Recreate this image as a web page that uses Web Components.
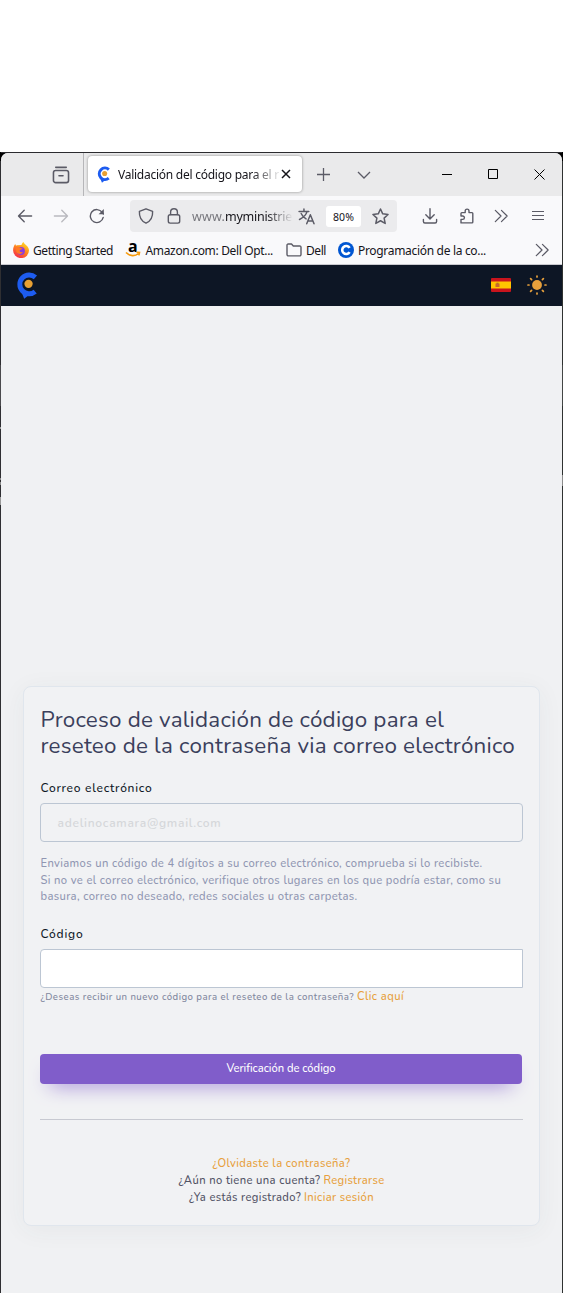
<!DOCTYPE html>
<html lang="es">
<head>
<meta charset="utf-8">
<title>Validación del código</title>
<style>
html,body{margin:0;background:#fff}
body{height:1293px;overflow:hidden;padding-top:152px;box-sizing:border-box}
</style>
</head>
<body>
<browser-window>
  <tab-strip slot="chrome"></tab-strip>
  <nav-toolbar slot="chrome"></nav-toolbar>
  <bookmarks-bar slot="chrome"></bookmarks-bar>
  <site-header></site-header>
  <code-form></code-form>
</browser-window>
<script>
const define=(name,html,init)=>customElements.define(name,class extends HTMLElement{
  constructor(){super();this.attachShadow({mode:'open'}).innerHTML=html;}
  connectedCallback(){if(init)init(this);}
});

/* One line of text, tracked so that it fills the width in its "w" attribute. */
define('text-line','<style>:host{display:inline-block;white-space:pre;flex:none}span{display:inline-block}</style><span><slot></slot></span>',el=>{
  const w=+el.getAttribute('w');
  const s=el.shadowRoot.querySelector('span');
  s.style.letterSpacing='0px';
  const d=(w-s.getBoundingClientRect().width)/Math.max(1,el.textContent.length);
  s.style.letterSpacing=d+'px';
  el.style.width=w+'px';
});

const logo=(w,h)=>`<svg width="${w}" height="${h}" viewBox="0 0 22 26"><path d="M18.600 5.200A9 9 0 1 0 18.400 18.800" fill="none" stroke="#1d5cf0" stroke-width="4.700"/><path d="M5.500 20 L7.800 25.800 L14 21z" fill="#1d5cf0"/><circle cx="12" cy="11.400" r="4" fill="#e8a033"/></svg>`;
const svg=(w,body,extra='')=>`<svg width="${w}" height="${w}" viewBox="0 0 16 16" fill="none" stroke="#5b5b66" stroke-width="1.4" stroke-linecap="round" stroke-linejoin="round" ${extra}>${body}</svg>`;

define('browser-window',`<style>
:host{display:flex;flex-direction:column;box-sizing:border-box;height:1141px;padding:1px 1px 0;
background:
linear-gradient(#000 9px,#2f2f32 9px 213px,#4a4a4d 213px 254px,#2f2f32 254px 275px,#999 275px 277px,#2f2f32 277px 326px,#888 326px 328px,#2f2f32 328px 330px,#888 330px 333px,#2f2f32 333px 345px,#999 345px 353px,#2f2f32 353px) left/1px 100% no-repeat,
linear-gradient(#000 9px,#2f3231 9px 213px,#434645 213px 254px,#2f3231 254px 323px,#8c8c8c 323px 334px,#2f3231 334px) right/1px 100% no-repeat,
linear-gradient(#2b2b2f,#2b2b2f) top/100% 1px no-repeat,#000}
.win{flex:1;display:flex;flex-direction:column;border-radius:7px 7px 0 0;overflow:hidden;background:#f0f1f3}
</style><div class="win"><slot name="chrome"></slot><slot></slot></div>`);

define('tab-strip',`<style>
:host{display:flex;height:43px;background:#eaeaeb;font:12px "Noto Sans","Open Sans",sans-serif;color:#15141a}
.view{width:82px;border-right:1px solid #b6b6b9;box-sizing:content-box;display:flex;align-items:center;padding-left:0}
.view svg{margin-left:51px}
.tab{margin:3px 0 0 4px;width:214px;height:36px;background:#fff;border-radius:4px;box-shadow:0 0 3px rgba(0,0,0,.4);display:flex;align-items:center;box-sizing:border-box;padding-left:9px}
.t{width:162px;margin-left:7px;-webkit-mask-image:linear-gradient(90deg,#000 134px,transparent 164px)}
.x{margin-left:1px}
.r{display:flex;align-items:center;flex:1}
</style>
<div class="view">${svg(18,'<path d="M3.3 1.2h9.4" /><rect x="1.3" y="4" width="13.4" height="10.8" rx="2"/><path d="M6.2 8.6h3.6"/>')}</div>
<div class="tab">${logo(14,17)}<div class="t"><text-line w="161">Validación del código para el r</text-line></div><svg class="x" width="10" height="10" viewBox="0 0 10 10" stroke="#15141a" stroke-width="1.5"><path d="M1 1l8 8M9 1l-8 8"/></svg></div>
<div class="r"><svg style="margin-left:15px" width="13" height="13" stroke="#5b5b66" stroke-width="1.3"><path d="M6.5 0v13M0 6.5h13"/></svg>
<svg style="margin-left:27px" width="14" height="8" fill="none" stroke="#5b5b66" stroke-width="1.3"><path d="M1 1l6 6 6-6"/></svg>
<svg style="margin-left:71px" width="10" height="10" stroke="#000"><path d="M0 4.5h10"/></svg>
<svg style="margin-left:36px;position:relative;top:-1px" width="10" height="10" stroke="#000" fill="none"><path d="M.5 .5h9v9h-9z"/></svg>
<svg style="margin-left:35.5px" width="11" height="11" stroke="#000" fill="none"><path d="M.5 .5l10 10M10.5 .5l-10 10"/></svg></div>`);

define('nav-toolbar',`<style>
:host{display:flex;align-items:center;height:40px;background:#f9f9fb;font:12.5px "Noto Sans","Open Sans",sans-serif;color:#15141a}
svg{flex:none}
.url{margin-left:25px;width:267px;height:32px;box-sizing:border-box;background:#ebebed;border-radius:4px;display:flex;align-items:center;padding-left:8px}
.h{width:100px;margin-left:10px;color:#77777d;-webkit-mask-image:linear-gradient(90deg,#000 74px,transparent 101px);display:flex}
b{font-weight:400;color:#15141a}
.z{margin-left:11px;width:35px;height:21px;line-height:22px;border-radius:3px;background:#fff;font-size:10.5px;display:flex;justify-content:center}
</style>
${svg(16,'<path d="M14.6 8H1.6M7.2 2.3L1.5 8l5.7 5.7"/>','style="margin-left:16px"')}
${svg(16,'<path d="M1.4 8h13M8.8 2.3L14.5 8l-5.7 5.7"/>','style="margin-left:20px;opacity:.4"')}
${svg(16,'<path d="M14.2 9.4a6.5 6.5 0 1 1-1-5l1.2 1.6"/><path d="M14.8 1v5.2H9.6z" fill="#5b5b66" stroke="none"/>','style="margin-left:20px"')}
<div class="url">
${svg(16,'<path d="M8 .8l6.600 2.600c.300 5-1.600 9.600-6.600 11.800C3 13 1.100 8.400 1.400 3.400z"/>')}
${svg(16,'<rect x="2.300" y="6.800" width="11.400" height="8.300" rx="1.800"/><path d="M4.600 6.500V4.200a3.400 3.400 0 0 1 6.800 0v2.300"/>','style="margin-left:12px"')}
<div class="h"><text-line w="33">www.</text-line><b><text-line w="67">myministrie</text-line></b></div>
${svg(17,'<path d="M1 3.200h9.200M5.600 1v2M8.500 3.400C7.500 7 4.500 9.200 1.400 10.800M3 5.200c1 2.400 2.700 4 4.600 5.100"/><path d="M8.200 14.800L11.600 6.400 15.100 14.800M9.400 12.200h4.500"/>','style="margin-left:6px"')}
<div class="z"><text-line w="21">80%</text-line></div>
${svg(17,'<path d="M8 .9l2.100 4.600 5 .6-3.700 3.400 1 5L8 12l-4.400 2.500 1-5L.9 6.100l5-.6z"/>','style="margin-left:11px"')}
</div>
${svg(16,'<path d="M8 .8v9.800M3.800 6.700L8 10.900l4.200-4.200M1.400 11.500v2a1.500 1.500 0 0 0 1.500 1.500h10.200a1.500 1.500 0 0 0 1.500-1.500v-2"/>','style="margin-left:25px"')}
${svg(16,'<path d="M2 14.900V11.400h1.700a1.700 1.700 0 0 0 0-3.400H2V5.400a.8.800 0 0 1 .8-.8h3.400V3a1.900 1.900 0 0 1 3.800 0v1.600h3a.8.800 0 0 1 .8.800v8.700a.8.800 0 0 1-.8.800z"/>','style="margin-left:21px"')}
${svg(14,'<path d="M1.500 1.500L8 8l-6.500 6.500M8.500 1.500L15 8l-6.500 6.500"/>','style="margin-left:19px"')}
<svg style="margin-left:24px;position:relative;top:-1px" width="12" height="11" stroke="#5b5b66" stroke-width="1.200"><path d="M0 1.500h12M0 5.500h12M0 9.500h12"/></svg>`);

define('bookmarks-bar',`<style>
:host{display:flex;align-items:center;height:29px;background:#f9f9fb;border-bottom:1px solid #c9c9cf;box-sizing:border-box;font:12px "Noto Sans","Open Sans",sans-serif;color:#15141a}
svg{flex:none}text-line{margin-left:4px}
.a{width:14px;margin-left:13px;flex:none;height:18px;position:relative;font:bold 16px/11px "Open Sans",sans-serif;color:#000}
.a text-line{margin-left:2px}
.a svg{position:absolute;left:-1px;top:10px}
</style>
<svg style="margin-left:12px" width="16" height="16" viewBox="0 0 16 16"><defs><linearGradient id="g" x1=".8" y1="0" x2=".2" y2="1"><stop offset="0" stop-color="#ffe226"/><stop offset=".45" stop-color="#ff8a1c"/><stop offset="1" stop-color="#f5234f"/></linearGradient></defs><path d="M8.500 3C9 1.500 9.500 .8 10.500 0c.4 1.600 2 2.300 3 3.600 1.400 1.300 2.500 3.100 2.500 5A7.900 7.500 0 0 1 .1 8.500C0 6 1 3.500 2.200 2.100l.8 1.600 1-.4z" fill="url(#g)"/><circle cx="8" cy="9" r="3.900" fill="#8a3de0"/><path d="M2.800 5.500c2-.8 3.600-.2 5 .6l2 .5c-1 1.100-2.300.8-3 1.500-.6 1.700 1.200 2.800 3.200 2-1.500 3.200-6.200 2.300-6.800-1z" fill="#ff7a24"/></svg>
<text-line w="80">Getting Started</text-line>
<div class="a"><text-line w="9">a</text-line><svg width="16" height="7" fill="none" stroke="#f79a0c" stroke-width="1.600"><path d="M1 1.500c4 4 9 4 12.500 1M11.500 1.300l3 .1-.6 3"/></svg></div>
<text-line w="127.5" style="margin-left:5.5px">Amazon.com: Dell Opt...</text-line>
${svg(16,'<path d="M1 12.500V3.300A1.200 1.200 0 0 1 2.200 2H5.500l1.800 2h6.300A1.300 1.300 0 0 1 15 5.300v7.200a1.400 1.400 0 0 1-1.400 1.400H2.400A1.400 1.400 0 0 1 1 12.500z"/>','style="margin-left:13px"')}
<text-line w="20">Dell</text-line>
<svg style="margin-left:12px" width="16" height="16"><circle cx="8" cy="8" r="8" fill="#0056d2"/><path d="M11.600 5.900A4 4 0 1 0 11.600 10.100" fill="none" stroke="#fff" stroke-width="2.600"/></svg>
<text-line w="128">Programación de la co...</text-line>
${svg(14,'<path d="M1.500 1.500L8 8l-6.500 6.500M8.500 1.500L15 8l-6.500 6.500"/>','style="margin-left:49px"')}`);

define('site-header',`<style>
:host{display:flex;align-items:center;height:41px;box-sizing:border-box;flex:none;background:#0d1625;padding:0 15.500px 1px 15px;justify-content:space-between}
div{display:flex;align-items:center;gap:16px}
</style>${logo(23,27)}
<div><svg width="20" height="14"><rect width="20" height="14" rx="1" fill="#c8141d"/><path fill="#ffc400" d="M0 3.500h20v7H0z"/><path d="M4.500 5.500h4v3.500h-4z" fill="#c7652c"/><path d="M5.500 4.700h2v1h-2z" fill="#996b29"/></svg>
<svg width="20" height="20" stroke="#e7a03c" stroke-width="1.700" stroke-linecap="round"><circle cx="10" cy="10" r="4.900" fill="#e7a03c" stroke="none"/><path d="M10 1v1M10 18V19M1 10h1M18 10H19M3.600 3.600l1 1M15.400 15.400l1 1M3.600 16.400l1-1M15.400 4.600l1-1"/></svg></div>`);

define('form-input',`<style>:host{display:flex;align-items:center;height:39px;box-sizing:border-box;border:1px solid #bcc6d3;border-radius:4px;padding-left:16.500px;font-size:12px;font-weight:600;color:#d5d7da}
:host([white]){background:#fff;border-radius:4px 0 0 4px}</style><slot></slot>`);

define('submit-button',`<style>:host{display:flex;align-items:center;justify-content:center;height:30px;width:482px;border-radius:4px;background:#805dca;color:#fff;font-size:11.200px;font-weight:500;box-shadow:0 10px 20px -10px #805dca}</style><slot></slot>`);

define('code-form',`<style>
:host{display:block;margin:380px 22px 0;width:517px;height:540px;box-sizing:border-box;border:1px solid #e0e6ed;border-radius:8px;background:#f1f2f4;box-shadow:0 4px 26px rgba(60,70,80,.055);padding:20px 16px 0;font-family:"Nunito","Open Sans","Noto Sans",sans-serif;color:#0e1726}
h1{margin:0 0 0 .5px;font-weight:400;font-size:22.400px;line-height:26px;color:#3b3f5c;display:flex;flex-direction:column}
.l{font-size:12px;font-weight:500;line-height:20px;display:flex;margin:0 0 5px .5px}
.n{margin:14px 0 0 .5px;display:flex;flex-direction:column;font-size:11.200px;font-weight:500;line-height:16.600px;color:#9096b2}
.s{display:flex;align-items:baseline;font-size:9.600px;font-weight:500;line-height:17px;color:#82889f;gap:3px;margin-left:.5px}
a{color:#e7a03c;font-size:11.200px;font-weight:500}
hr{border:0;height:1px;background:#c7c9d1;margin:35px 0}
.f{display:flex;flex-direction:column;align-items:center;font-size:11.200px;font-weight:500;line-height:17px;color:#515365}
.f div{display:flex;gap:3px}
</style>
<h1><text-line w="403.5">Proceso de validación de código para el</text-line><text-line w="474.5">reseteo de la contraseña via correo electrónico</text-line></h1>
<div class="l" style="margin-top:19px"><text-line w="112">Correo electrónico</text-line></div>
<form-input><text-line w="164">adelinocamara@gmail.com</text-line></form-input>
<div class="n"><text-line w="442">Enviamos un código de 4 dígitos a su correo electrónico, comprueba si lo recibiste.</text-line><text-line w="460.5">Si no ve el correo electrónico, verifique otros lugares en los que podría estar, como su</text-line><text-line w="317">basura, correo no deseado, redes sociales u otras carpetas.</text-line></div>
<div class="l" style="margin-top:18px"><text-line w="43">Código</text-line></div>
<form-input white></form-input>
<div class="s"><text-line w="313.5">¿Deseas recibir un nuevo código para el reseteo de la contraseña?</text-line><a><text-line w="47">Clic aquí</text-line></a></div>
<submit-button style="margin-top:49px"><text-line w="109">Verificación de código</text-line></submit-button>
<hr>
<div class="f"><a><text-line w="138">¿Olvidaste la contraseña?</text-line></a>
<div><text-line w="142">¿Aún no tiene una cuenta?</text-line><a><text-line w="61">Registrarse</text-line></a></div>
<div><text-line w="112">¿Ya estás registrado?</text-line><a><text-line w="70">Iniciar sesión</text-line></a></div></div>`);
</script>
</body>
</html>
